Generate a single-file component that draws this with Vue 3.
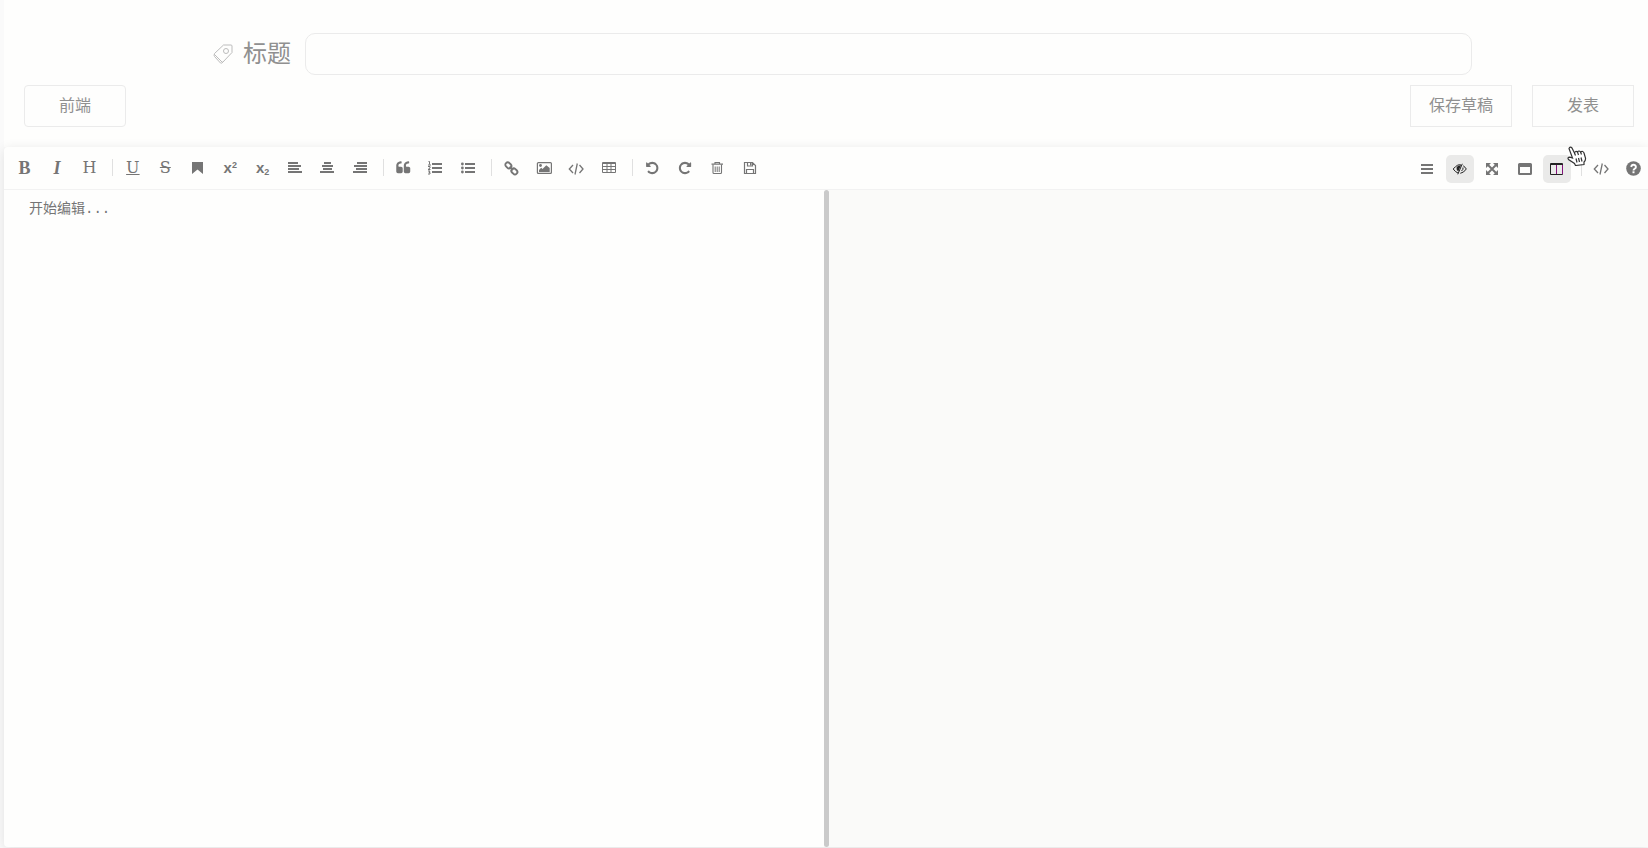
<template>
  <div class="page">
    <header class="head">
      <div class="title-row">
        <svg class="tag-icon" viewBox="0 0 20 20" aria-hidden="true">
          <path d="M10.500 1H18q1 0 1 1v6.500L10 18q-.5.5-1 0L1.500 10.500q-.5-.5 0-1z" />
          <path d="M1.500 10q-1 1 0 2.500l6 6.500q1 .8 2.500-1" />
          <circle cx="13" cy="7" r="2.500" />
        </svg>
        <label class="title-label" for="title">标题</label>
        <input id="title" v-model="title" class="title-input" type="text">
      </div>
      <div class="action-row">
        <button type="button" class="btn btn-category">前端</button>
        <div class="actions">
          <button type="button" class="btn">保存草稿</button>
          <button type="button" class="btn">发表</button>
        </div>
      </div>
    </header>

    <main class="editor">
      <div class="toolbar">
        <div class="tools">
          <template v-for="(group, i) in leftTools" :key="i">
            <span v-if="i" class="divider" />
            <template v-for="t in group" :key="t.name">
              <button type="button" class="tool" :title="t.label" :aria-label="t.label">
                <span v-if="t.text" :class="['glyph', 'glyph-' + t.name]">{{ t.text }}<sup v-if="t.sup">{{ t.sup }}</sup><sub v-if="t.sub">{{ t.sub }}</sub></span>
                <svg v-else class="icon" viewBox="0 0 16 16" v-html="ICONS[t.name]" />
              </button>{{ ' ' }}
            </template>
          </template>
        </div>
        <div class="tools">
          <template v-for="(group, i) in rightTools" :key="i">
            <span v-if="i" class="divider" />
            <template v-for="t in group" :key="t.name">
              <button
                type="button"
                :class="['tool', { selected: active[t.name] }]"
                :title="t.label"
                :aria-label="t.label"
                @click="toggle(t.name)"
              >
                <svg class="icon" viewBox="0 0 16 16" v-html="ICONS[t.name]" />
              </button>{{ ' ' }}
            </template>
          </template>
        </div>
        <svg class="pointer" viewBox="0 0 20 20" aria-hidden="true">
          <path d="M2 2.500Q3.200 0 5 2L7.500 7Q8.500 4.500 10.500 6Q12 4 13.500 6Q16 4.500 17 7L18.500 12Q18.800 14.500 17 16V18.500L8.500 19.500L7.500 17.500L1.500 13.500Q0 11.500 3 11.200L5.500 12Z" />
          <path d="M7.500 7l1 2.500M10.500 6l1 3M13.500 6l1 2.500M9 12.500l1 4M11.500 12l1 4M14 11.500l1 4" />
        </svg>
      </div>
      <div class="panes">
        <div class="edit-pane">
          <textarea v-model="content" class="edit-area" placeholder="开始编辑..." aria-label="正文" />
          <div class="scroll-bar" />
        </div>
        <section class="preview-pane" />
      </div>
    </main>
  </div>
</template>

<script setup>
import { reactive, ref } from 'vue';

const title = ref('');
const content = ref('');
const active = reactive({ eye: true, columns: true });

function toggle(name) {
  active[name] = !active[name];
}

const CODE = '<path d="M5 4L1.300 8 5 12M11.500 4l3.500 4-3.500 4M9.300 2.500L7 13.500" fill="none" stroke="currentColor" stroke-width="1.300"/>';

const ICONS = {
  mark: '<path d="M3 1h11v12L8.500 8.500 3 13z"/>',
  left: '<path d="M1 1h10v2H1zM1 4h13v2H1zM1 7h11v2H1zM1 10h14v2H1z"/>',
  center: '<path d="M5 1h7v2H5zM3 4h11v2H3zM4 7h9v2H4zM1 10h14v2H1z"/>',
  right: '<path d="M5 1h10v2H5zM2 4h13v2H2zM4 7h11v2H4zM1 10h14v2H1z"/>',
  quote: '<path transform="scale(.0084) translate(86 -90)" d="M832 960v384q0 80-56 136t-136 56h-384q-80 0-136-56t-56-136v-704q0-104 40.500-198.500t109.500-163.500 163.500-109.500 198.500-40.500h64q26 0 45 19t19 45v128q0 26-19 45t-45 19h-64q-106 0-181 75t-75 181v32q0 40 28 68t68 28h224q80 0 136 56t56 136zm896 0v384q0 80-56 136t-136 56h-384q-80 0-136-56t-56-136v-704q0-104 40.500-198.500t109.500-163.500 163.500-109.500 198.500-40.500h64q26 0 45 19t19 45v128q0 26-19 45t-45 19h-64q-106 0-181 75t-75 181v32q0 40 28 68t68 28h224q80 0 136 56t56 136z"/>',
  ol: '<path d="M5 2h10v2H5zM5 6h10v2H5zM5 10h10v2H5z"/><path d="M1.500 .5h1v3M1 4h3M1 5.500h2v1.500l-2 1.500h2.500M1 10h2l-1 1.500h1v1.500H1" fill="none" stroke="currentColor" stroke-width="1"/>',
  ul: '<path d="M5 2h10v2H5zM5 6h10v2H5zM5 10h10v2H5z"/><circle cx="2.400" cy="3" r="1.400"/><circle cx="2.400" cy="7" r="1.400"/><circle cx="2.400" cy="11" r="1.400"/>',
  link: '<g fill="none" stroke="currentColor" stroke-width="1.900" transform="rotate(45 8 7)"><rect x="1" y="4.600" width="6.500" height="4.800" rx="2.400"/><rect x="9.500" y="4.600" width="6.500" height="4.800" rx="2.400"/><path d="M6 7h5"/></g>',
  image: '<rect x="1.400" y="1.600" width="14" height="10.800" rx="1" fill="none" stroke="currentColor" stroke-width="1.200"/><circle cx="4.500" cy="4.500" r="1.400"/><path d="M3 11V9l2.200-2.200L6.500 8l3.800-3.800L13.700 7v4z"/>',
  code: CODE,
  table: '<path fill-rule="evenodd" d="M2 1h12q1 0 1 1v9q0 1-1 1H2q-1 0-1-1V2q0-1 1-1zM2 3v2h3.500V3zM6.500 3v2h3V3zM10.500 3v2H14V3zM2 6v2h3.500V6zM6.500 6v2h3V6zM10.500 6v2H14V6zM2 9v2h3.500V9zM6.500 9v2h3V9zM10.500 9v2H14V9z"/>',
  undo: '<path transform="scale(.0080) translate(134 -20)" d="M1664 896q0 156-61 298t-164 245-245 164-298 61q-172 0-327-72.500t-264-204.500q-7-10-6.500-22.500t8.500-20.500l137-138q10-9 25-9 16 2 23 12 73 95 179 147t225 52q104 0 198.500-40.500t163.500-109.500 109.500-163.500 40.500-198.500-40.500-198.500-109.500-163.500-163.500-109.500-198.500-40.500q-98 0-188 35.500t-160 101.500l137 138q31 30 14 69-17 40-59 40h-448q-26 0-45-19t-19-45v-448q0-42 40-59 39-17 69 14l130 129q107-101 244.500-156.500t284.500-55.500q156 0 298 61t245 164 164 245 61 298z"/>',
  redo: '<path transform="scale(.0080) translate(104 -20)" d="M1664 256v448q0 26-19 45t-45 19h-448q-42 0-59-40-17-39 14-69l138-138q-148-137-349-137-104 0-198.500 40.500t-163.500 109.500-109.500 163.500-40.500 198.500 40.500 198.500 109.500 163.500 163.500 109.500 198.500 40.500q119 0 225-52t179-147q7-10 23-12 15 0 25 9l137 138q9 8 9.500 20.500t-7.500 22.500q-109 132-264 204.500t-327 72.500q-156 0-298-61t-245-164-164-245-61-298 61-298 164-245 245-164 298-61q147 0 284.500 55.500t244.500 156.500l130-129q29-31 70-14 39 17 39 59z"/>',
  trash: '<path d="M4 3.500v8q0 1 1 1h6.500q1 0 1-1v-8M6 3V1.500h4.500V3" fill="none" stroke="currentColor" stroke-width="1.100"/><path d="M2.500 2.500H14v1.200H2.500zM5.700 5.500h1V11h-1zM7.700 5.500h1V11h-1zM9.700 5.500h1V11h-1z"/>',
  save: '<path d="M2.500 1.500h8l3 3v8h-11zM4.500 12.500v-4h7v4M5.500 1.500v3.500h5v-3.500" fill="none" stroke="currentColor" stroke-width="1.200"/><path d="M8 2h1.500v2.500H8z"/>',
  menu: '<path d="M2 3h12v2H2zM2 7h12v2H2zM2 11h12v2H2z"/>',
  eye: '<path d="M1.200 8Q6 2.500 9 4M1.200 8q2.300 3.200 4.800 4M11.200 4.800Q13.200 6 14.300 8q-2.500 3.800-6 4.300M10.300 2.800l-4.500 10.500M11 6.500q.5 2-1.500 3.500" fill="none" stroke="currentColor" stroke-width="1"/><path d="M9 4.300L6.300 10.500Q4.200 9 4.500 6.800 5.200 4.700 9 4.300z"/>',
  expand: '<path d="M2 2h5L2 7zM14 2v5L9 2zM2 14V9l5 5zM14 14H9l5-5z"/><path d="M3.500 3.500l9 9M12.500 3.500l-9 9" stroke="currentColor" stroke-width="2"/>',
  window: '<path fill-rule="evenodd" d="M2.500 2h11Q15 2 15 3.500v9q0 1.500-1.500 1.500h-11Q1 14 1 12.500v-9Q1 2 2.500 2zM3 6v6h10V6z"/>',
  columns: '<path fill-rule="evenodd" d="M2 2h11q1 0 1 1v10q0 1-1 1H2q-1 0-1-1V3q0-1 1-1zM2 4v9h5V4zM8 4v9h5V4z"/><path d="M7 4h1v9H7zM13 4h1v9h-1z" fill="#84137c"/>',
  source: CODE,
  help: '<circle cx="8.500" cy="7.500" r="7.300"/><path d="M6.200 6Q6.500 3.800 8.500 3.800t2.400 2.100q0 1.200-1.200 1.900T8.500 9.500" fill="none" stroke="#fff" stroke-width="1.900"/><path d="M7.500 10.300h2v1.900h-2z" fill="#fff"/>',
};

const leftTools = [
  [
    { name: 'bold', label: '粗体', text: 'B' },
    { name: 'italic', label: '斜体', text: 'I' },
    { name: 'header', label: '标题', text: 'H' },
  ],
  [
    { name: 'underline', label: '下划线', text: 'U' },
    { name: 'strike', label: '中划线', text: 'S' },
    { name: 'mark', label: '标记' },
    { name: 'sup', label: '上角标', text: 'x', sup: '2' },
    { name: 'sub', label: '下角标', text: 'x', sub: '2' },
    { name: 'left', label: '居左' },
    { name: 'center', label: '居中' },
    { name: 'right', label: '居右' },
  ],
  [
    { name: 'quote', label: '段落引用' },
    { name: 'ol', label: '有序列表' },
    { name: 'ul', label: '无序列表' },
  ],
  [
    { name: 'link', label: '链接' },
    { name: 'image', label: '添加图片' },
    { name: 'code', label: '代码块' },
    { name: 'table', label: '表格' },
  ],
  [
    { name: 'undo', label: '上一步' },
    { name: 'redo', label: '下一步' },
    { name: 'trash', label: '清空' },
    { name: 'save', label: '保存' },
  ],
];

const rightTools = [
  [
    { name: 'menu', label: '标题导航' },
    { name: 'eye', label: '预览' },
    { name: 'expand', label: '全屏编辑' },
    { name: 'window', label: '沉浸式阅读' },
    { name: 'columns', label: '单栏/双栏' },
  ],
  [
    { name: 'source', label: '查看html文本' },
    { name: 'help', label: '帮助' },
  ],
];
</script>

<style>
body { margin: 0; background: #fafafa; }
</style>

<style scoped>
.page {
  display: flex;
  flex-direction: column;
  box-sizing: border-box;
  min-height: 100vh;
  padding: 0 0 1px 4px;
  font-family: "Liberation Sans", "Noto Sans CJK SC", sans-serif;
  color: #909090;
}
.head {
  box-sizing: border-box;
  padding: 33px 14px 20px 20px;
  background: #fefefd;
}
.title-row {
  display: flex;
  align-items: center;
  margin: 0 162px 10px 189px;
}
.tag-icon {
  width: 20px; height: 20px;
  margin-right: 10px;
  fill: none; stroke: #bcbcbc;
}
.title-label { margin-right: 14px; font-size: 24px; line-height: 40px; }
.title-input {
  flex: 1;
  box-sizing: border-box;
  min-width: 0; height: 42px;
  padding: 0 12px;
  border: 1px solid #ebebeb;
  border-radius: 10px;
  background: #fefefd;
  color: #606060;
  font: inherit;
}
.action-row, .actions { display: flex; justify-content: space-between; }
.actions { gap: 20px; }
.btn {
  width: 102px; height: 42px;
  padding: 0 0 4px;
  border: 1px solid #ebebeb;
  background: #fefefd;
  color: #909090;
  font: inherit;
  font-size: 16px;
}
.btn-category { border-radius: 4px; }

.editor {
  position: relative;
  display: flex;
  flex-direction: column;
  flex: 1;
  background: #fefefd;
  border-radius: 4px 0 0 4px;
  box-shadow: 0 2px 12px 0 rgba(0, 0, 0, .1);
}
.toolbar {
  position: relative;
  display: flex;
  justify-content: space-between;
  padding: 8px 1px 6px 6px;
  border-bottom: 1px solid #f2f2f2;
}
.tools { height: 28px; font-size: 16px; white-space: nowrap; }
.tool {
  display: inline-flex;
  align-items: center;
  justify-content: center;
  width: 28px; height: 28px;
  padding: 0;
  border: 0;
  border-radius: 5px;
  background: none;
  color: #757575;
  vertical-align: top;
}
.tool.selected { background: #eaeae9; color: #222; }
.icon { width: 16px; height: 16px; fill: currentColor; }
.divider {
  display: inline-block;
  width: 1px; height: 17px;
  margin: 4px 5px 0;
  background: #e0e0e0;
  vertical-align: top;
}
.glyph {
  padding: 0 0 2px 1px;
  font-family: "DejaVu Serif", serif;
  font-size: 16px; line-height: 20px;
}
.glyph-bold, .glyph-italic {
  font-family: "Liberation Serif", serif;
  font-size: 18px; font-weight: 700;
}
.glyph-italic { font-style: italic; }
.glyph-underline { text-decoration: underline; }
.glyph-strike { text-decoration: line-through; }
.glyph-sup, .glyph-sub {
  font-family: "Liberation Sans", sans-serif;
  font-size: 15px; font-weight: 700;
}
.glyph sup, .glyph sub { font-size: 9px; line-height: 0; }
.glyph sup { vertical-align: 5px; }
.glyph sub { vertical-align: -2px; }
.pointer {
  position: absolute;
  top: -1px; right: 61px;
  width: 20px; height: 20px;
  fill: #fff; stroke: #333; stroke-width: 1.2;
}

.panes {
  display: grid;
  flex: 1;
  grid-template-columns: calc(50% + 3px) 1fr;
}
.edit-pane { display: flex; }
.edit-area {
  flex: 1;
  box-sizing: border-box;
  min-width: 0;
  padding: 9px 25px;
  border: 0;
  outline: 0;
  resize: none;
  background: none;
  color: #606060;
  font-family: "Liberation Mono", "Noto Sans CJK SC", monospace;
  font-size: 14px; line-height: 20px;
}
.edit-area::placeholder { color: #757575; opacity: 1; }
.scroll-bar { width: 5px; border-radius: 3px; background: #cacaca; }
.preview-pane { background: #fafaf9; }
</style>
